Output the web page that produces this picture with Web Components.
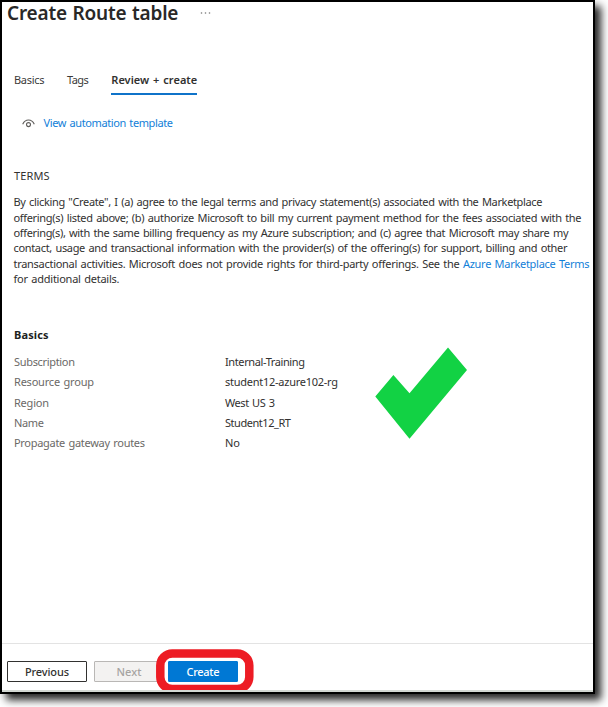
<!DOCTYPE html>
<html lang="en"><head><meta charset="utf-8"><title>Create Route table</title>
<style>html,body{margin:0;background:#fff}body{width:608px;height:707px;overflow:hidden;font:11px "Noto Sans","Open Sans",sans-serif;color:#323130}</style></head>
<body><route-page></route-page>
<script>
// Single line of text whose tracking is adjusted to fill the given width.
class FitText extends HTMLElement{
  connectedCallback(){
    this.attachShadow({mode:'open'}).innerHTML='<style>:host{display:block;white-space:pre;word-spacing:1px}span{display:inline-block}::slotted(a){color:#1280d8;text-decoration:none}</style><span><slot></slot></span>';
    const s=this.shadowRoot.querySelector('span'),w=+this.getAttribute('w');
    const n=this.textContent.length;
    const ls=(w-s.getBoundingClientRect().width)/(n-1);
    s.style.letterSpacing=ls+'px';
    s.style.marginRight=-ls+'px';
  }
}
class TabItem extends HTMLElement{
  constructor(){super();this.attachShadow({mode:'open'}).innerHTML='<style>:host{display:block;height:20.5px;line-height:16px;color:#3b3a39}:host([active]){font-weight:600;color:#323130;border-bottom:2px solid #0f73c9}</style><slot></slot>';}
}
class TermsText extends HTMLElement{
  constructor(){super();this.attachShadow({mode:'open'}).innerHTML='<style>:host{display:block;line-height:15.3px}</style><slot></slot>';}
}
class InfoRow extends HTMLElement{
  constructor(){super();this.attachShadow({mode:'open'}).innerHTML='<style>:host{display:grid;grid-template-columns:211px 1fr;height:20.4px;line-height:20.4px}.k{color:#6b6967}</style><div class="k"><slot name="key"></slot></div><div><slot></slot></div>';}
}
class ActionButton extends HTMLElement{
  constructor(){super();this.attachShadow({mode:'open'}).innerHTML='<style>:host{display:flex;box-sizing:border-box;height:21px;align-items:center;justify-content:center;border:1px solid #323130;border-radius:1px;line-height:19px;background:#fff;font-weight:500}:host([kind=disabled]){background:#f3f2f1;border-color:#b9b7b5;color:#a6a4a2}:host([kind=primary]){background:#0078d4;border-color:#0078d4;color:#fff}</style><slot></slot>';}
}
class CheckMark extends HTMLElement{
  constructor(){super();this.attachShadow({mode:'open'}).innerHTML='<style>:host{display:block;width:92px;height:92px}svg{display:block}</style><svg width="92" height="92"><path fill="#12d244" d="M.3 49.5 18.4 28 34.5 46.3 73 .5 92 23 34.5 91.7z"/></svg>';}
}
class RoutePage extends HTMLElement{
  constructor(){super();this.attachShadow({mode:'open'}).innerHTML=`<style>
:host{display:block;position:relative;box-sizing:border-box;width:595px;height:694px;border:2px solid #000;background:#fff;box-shadow:6px 6px 8px 0 rgba(0,0,0,.85)}
.page{display:flex;flex-direction:column;height:690px}
header{display:flex;height:20px;padding-left:5px;line-height:23px;color:#292827}
header fit-text{font-size:19px;font-weight:600}
header svg{margin:9px 0 0 22px}
nav{display:flex;gap:22.4px;height:23px;margin:50px 0 0 12px}
.view{display:flex;align-items:center;height:16px;line-height:16px;margin:20px 0 0 20px;gap:8.5px;color:#1280d8}
main{padding:0 0 0 12px}
.terms{margin-top:37px;line-height:16px}
terms-text{margin:10.4px 0 0 -.5px}
.head{margin:40.8px 0 8.8px;line-height:16px;font-weight:700;color:#201f1e}
footer{margin-top:auto;box-sizing:border-box;height:47px;border-top:1px solid #e3e3e3;display:flex;padding:17px 0 0 5px}
.strip{height:2px;background:#d3d8d3;flex:none}
.ring{position:absolute;left:153px;top:646px}
check-mark{position:absolute;left:373px;top:345px}
</style><div class="page">
<header><fit-text w="171.5">Create Route table</fit-text><svg width="12" height="4" fill="#777"><circle cx="1.5" cy="2" r=".8"/><circle cx="5.5" cy="2" r=".8"/><circle cx="9.5" cy="2" r=".8"/></svg></header>
<nav><tab-item><fit-text w="30.5">Basics</fit-text></tab-item><tab-item><fit-text w="22">Tags</fit-text></tab-item><tab-item active><fit-text w="86">Review + create</fit-text></tab-item></nav>
<div class="view"><svg width="13" height="9" fill="none" stroke="#605e5c" stroke-width="1.1"><path d="M.7 5.3C2 2.3 4 1 6.5 1s4.500 1.300 5.800 4.300"/><circle cx="6.500" cy="5.600" r="2"/></svg><fit-text w="129.5">View automation template</fit-text></div>
<main><fit-text class="terms" w="35.5">TERMS</fit-text>
<terms-text><fit-text w="529">By clicking "Create", I (a) agree to the legal terms and privacy statement(s) associated with the Marketplace</fit-text><fit-text w="568">offering(s) listed above; (b) authorize Microsoft to bill my current payment method for the fees associated with the</fit-text><fit-text w="555">offering(s), with the same billing frequency as my Azure subscription; and (c) agree that Microsoft may share my</fit-text><fit-text w="554">contact, usage and transactional information with the provider(s) of the offering(s) for support, billing and other</fit-text><fit-text w="576">transactional activities. Microsoft does not provide rights for third-party offerings. See the <a href="#">Azure Marketplace Terms</a></fit-text><fit-text w="106">for additional details.</fit-text></terms-text>
<fit-text class="head" w="34.5">Basics</fit-text>
<info-row><fit-text slot="key" w="61">Subscription</fit-text><fit-text w="80">Internal-Training</fit-text></info-row>
<info-row><fit-text slot="key" w="80">Resource group</fit-text><fit-text w="113">student12-azure102-rg</fit-text></info-row>
<info-row><fit-text slot="key" w="35">Region</fit-text><fit-text w="50">West US 3</fit-text></info-row>
<info-row><fit-text slot="key" w="30">Name</fit-text><fit-text w="66">Student12_RT</fit-text></info-row>
<info-row><fit-text slot="key" w="131">Propagate gateway routes</fit-text><fit-text w="15">No</fit-text></info-row></main>
<footer><action-button style="width:80px"><fit-text w="44">Previous</fit-text></action-button><action-button kind="disabled" style="width:70px;margin-left:7px"><fit-text w="25">Next</fit-text></action-button><action-button kind="primary" style="width:70px;margin-left:4px"><fit-text w="33">Create</fit-text></action-button></footer>
<div class="strip"></div></div>
<check-mark></check-mark>
<svg class="ring" width="100" height="42"><rect x="5.300" y="5.500" width="89" height="35.500" rx="12" fill="none" stroke="#ed1c24" stroke-width="8.500"/></svg>`;}
}
customElements.define('tab-item',TabItem);customElements.define('terms-text',TermsText);customElements.define('info-row',InfoRow);
customElements.define('action-button',ActionButton);customElements.define('check-mark',CheckMark);customElements.define('route-page',RoutePage);
customElements.define('fit-text',FitText);
</script></body></html>
